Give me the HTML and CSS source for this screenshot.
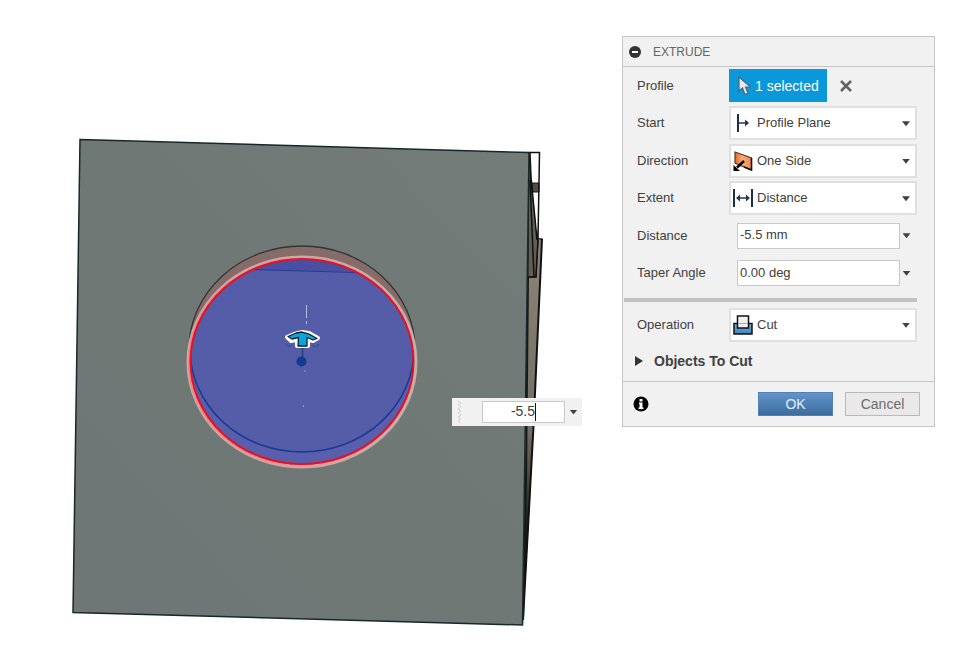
FILE: index.html
```html
<!DOCTYPE html>
<html lang="en">
<head>
<meta charset="utf-8">
<title>Extrude</title>
<link rel="stylesheet" href="styles.css">
</head>
<body>
<main class="viewport">
  <svg class="model" width="582" height="649" viewBox="0 0 582 649" aria-hidden="true">
    <defs>
      <linearGradient id="face" x1="0" y1="1" x2="1" y2="0">
        <stop offset="0" stop-color="#6e7776"/><stop offset=".5" stop-color="#6f7874"/><stop offset="1" stop-color="#737c78"/>
      </linearGradient>
      <linearGradient id="side" x1="0" y1="0" x2="0" y2="1">
        <stop offset="0" stop-color="#8b8577"/><stop offset=".5" stop-color="#746c63"/><stop offset=".75" stop-color="#1d1c1b"/><stop offset="1" stop-color="#111"/>
      </linearGradient>
      <linearGradient id="rim" x1="0" y1="0" x2="1" y2="0">
        <stop offset="0" stop-color="#ff7d80"/><stop offset=".5" stop-color="#f59092"/><stop offset="1" stop-color="#c9adab"/>
      </linearGradient>
      <clipPath id="profile"><ellipse cx="302" cy="362" rx="112" ry="103"/></clipPath>
    </defs>
    <path d="M528 240H542L533 426L530 500L523 625Z" fill="url(#side)"/>
    <path d="M542 239L533.500 426L529.500 500L523 620" fill="none" stroke="#111" stroke-width="2"/>
    <path d="M528 277L526 480L523 620" fill="none" stroke="#191715" stroke-width="2"/>
    <path d="M529 153L532 192L538 240L536 277H528Z" fill="#625e55" stroke="#161616"/>
    <path d="M530 153L532 183L537 238L538 153Z" fill="#fff"/>
    <path d="M532 183H539V192H533Z" fill="#514b45" stroke="#171717"/>
    <path d="M530 153L531 177L537 240M529 152.500H539.500L538 239H542.500M530 180L534 277M538 240L536 277H528" fill="none" stroke="#111" stroke-width="1.500"/>
    <path d="M80 139.500L529 152.500L522.500 625L73 612.500Z" fill="url(#face)" stroke="#18272b" stroke-width="1.500"/>
    <ellipse cx="302" cy="349" rx="113" ry="103" fill="#876b69" stroke="#303635" stroke-width="1.300"/>
    <ellipse cx="302" cy="362" rx="112" ry="103" fill="#595fac"/>
    <g clip-path="url(#profile)">
      <ellipse cx="302" cy="349" rx="112" ry="103" fill="#555ca8" stroke="#173c91" stroke-width="1.500"/>
      <path d="M200 250H410V272L250 270Z" fill="#494fa3"/>
      <path d="M250 269.500L356 272.500" stroke="#293b91"/>
    </g>
    <ellipse cx="302" cy="362" rx="114" ry="105" fill="none" stroke="#bfaeaa" stroke-width="3"/>
    <ellipse cx="302" cy="362" rx="113" ry="104" fill="none" stroke="url(#rim)" stroke-width="2"/>
    <ellipse cx="302" cy="361.500" rx="111.500" ry="102.500" fill="none" stroke="#e01426" stroke-width="2"/>
    <path d="M306.500 305V318M306.500 321V324" stroke="#b6b9d7"/>
    <path d="M286 344Q288 348 292 345M312 345Q316 349 319 344" fill="none" stroke="#394291"/>
    <path d="M302.500 348V358" stroke="#29387f" stroke-width="1.500"/>
    <circle cx="301.500" cy="361.500" r="5" fill="#103c91"/>
    <path d="M305 370V372M303.500 405V407" stroke="#9197cb"/>
    <path d="M302 332L309 333L318 338L313 341L308 339.500V346H297V339.500L291 341L287 337L294 334Z" fill="#fff" stroke="#fff" stroke-width="4" stroke-linejoin="round"/>
    <path d="M302 332L309 334L317 338.500L313 340L307 337.500V346H298L298.500 337.500L292 339L288 336.500L296 333Z" fill="#0aa5df" stroke="#101d27" stroke-width="1.300" stroke-linejoin="round"/>
  </svg>
  <form class="quick">
    <svg class="grip" width="6" height="24" viewBox="0 0 6 24" aria-hidden="true"><path d="M1 1L4 3L1 5L4 7L1 9L4 11L1 13L4 15L1 17L4 19L1 21L4 23" fill="none" stroke="#c6c6c6" stroke-dasharray="2 1"/></svg>
    <span class="quick-field"><input class="field" aria-label="Quick distance" value="-5.5"><i class="caret"></i></span>
    <button class="arrow" type="button" aria-label="Distance options"></button>
  </form>
</main>
<form class="panel">
  <header class="panel-head">
    <button class="plain" type="button" aria-label="Collapse"><svg width="12" height="12" viewBox="0 0 12 12"><circle cx="6" cy="6" r="6" fill="#333"/><path d="M3 6H9" stroke="#fff" stroke-width="2"/></svg></button>
    <h1>EXTRUDE</h1>
  </header>
  <div class="rows">
    <div class="row">
      <label for="profile-pick">Profile</label>
      <div class="selection">
        <button class="pick" id="profile-pick" type="button"><svg width="13" height="19" viewBox="0 0 13 19"><path d="M1 1V15L4.500 12L7 18.500L10 17L7.500 11H12.500Z" fill="#e2e8eb" stroke="#4c6878" stroke-width="1.200"/></svg>1 selected</button>
        <button class="plain" type="button" aria-label="Clear selection"><svg width="12" height="12" viewBox="0 0 12 12"><path d="M1 1L11 11M11 1L1 11" stroke="#626262" stroke-width="2.500"/></svg></button>
      </div>
    </div>
    <div class="row">
      <label for="start">Start</label>
      <div class="combo">
        <svg class="combo-icon" width="20" height="20" viewBox="0 0 20 20"><path d="M5 1V19" stroke="#192e50" stroke-width="2"/><path d="M6 10H14" stroke="#293746" stroke-width="1.500"/><path d="M12 6.500L16 10L12 13.500Z" fill="#293746"/></svg>
        <select id="start"><option>Profile Plane</option></select><i class="tri"></i>
      </div>
    </div>
    <div class="row">
      <label for="direction">Direction</label>
      <div class="combo">
        <svg class="combo-icon" width="20" height="20" viewBox="0 0 20 20"><defs><linearGradient id="copper"><stop offset="0" stop-color="#d66b2e"/><stop offset=".45" stop-color="#ffad74"/><stop offset="1" stop-color="#e8894b"/></linearGradient></defs><path d="M2 1L18.500 7V19L2 12Z" fill="url(#copper)" stroke="#593929" stroke-width="1.200"/><path d="M18.500 7V19L11 16" fill="none" stroke="#111" stroke-width="1.500"/><path d="M11 10L4 16.500" stroke="#000" stroke-width="2.500"/><path d="M.500 14V20H7Z" fill="#000"/></svg>
        <select id="direction"><option>One Side</option></select><i class="tri"></i>
      </div>
    </div>
    <div class="row">
      <label for="extent">Extent</label>
      <div class="combo">
        <svg class="combo-icon" width="20" height="20" viewBox="0 0 20 20"><path d="M1 1V19M19 1V19" stroke="#192e50" stroke-width="2"/><path d="M5 10H15" stroke="#293746" stroke-width="1.500"/><path d="M7 6.500L3 10L7 13.500ZM13 6.500L17 10L13 13.500Z" fill="#293746"/></svg>
        <select id="extent"><option>Distance</option></select><i class="tri"></i>
      </div>
    </div>
    <div class="row">
      <label for="distance">Distance</label>
      <div class="value"><input class="field" id="distance" value="-5.5 mm"><button class="arrow" type="button" aria-label="Distance options"></button></div>
    </div>
    <div class="row">
      <label for="taper">Taper Angle</label>
      <div class="value"><input class="field" id="taper" value="0.00 deg"><button class="arrow" type="button" aria-label="Taper options"></button></div>
    </div>
  </div>
  <hr>
  <div class="rows operation">
    <div class="row">
      <label for="operation">Operation</label>
      <div class="combo">
        <svg class="combo-icon" width="20" height="20" viewBox="0 0 20 20"><defs><linearGradient id="steel" x2="0" y2="1"><stop offset="0" stop-color="#79b0da"/><stop offset="1" stop-color="#3f83bd"/></linearGradient></defs><path d="M1 8.500H19V19H1Z" fill="url(#steel)" stroke="#111" stroke-width="1.500"/><path d="M4.500 1H15.500V13H4.500Z" fill="#f1f1f1" stroke="#111" stroke-width="1.500"/><path d="M5 8.500H15" stroke="#aaa"/></svg>
        <select id="operation"><option>Cut</option></select><i class="tri"></i>
      </div>
    </div>
    <button class="plain objects" type="button"><svg width="8" height="10" viewBox="0 0 8 10"><path d="M0 0L8 5L0 10Z" fill="#333"/></svg>Objects To Cut</button>
  </div>
  <footer class="panel-foot">
    <button class="plain info" type="button" aria-label="Information"><svg width="16" height="16" viewBox="0 0 16 16"><circle cx="8" cy="8" r="7.500" fill="#000"/><path d="M6.500 3H9.500V5.500H6.500ZM6 6.500H9.500V11.500H10.500V13H5.500V11.500H6.500V8H6Z" fill="#fff"/></svg></button>
    <button class="btn ok" type="submit">OK</button>
    <button class="btn" type="button">Cancel</button>
  </footer>
</form>
</body>
</html>
```
FILE: styles.css
```css
* { box-sizing: border-box; }
body {
  margin: 0;
  min-height: 100vh;
  display: flex;
  align-items: flex-start;
  background: #fff;
  color: #404040;
  font: 13px/16px "Liberation Sans", Arial, sans-serif;
}
button, input, select { font: inherit; color: inherit; margin: 0; border-radius: 0; outline: none; }
svg { display: block; flex: none; }
.viewport { position: relative; flex: 1; min-width: 582px; }
.quick {
  position: absolute;
  left: 452px;
  top: 398px;
  display: flex;
  align-items: center;
  width: 130px;
  height: 28px;
  padding-left: 5px;
  background: #f1f1f1;
}
.grip { margin-right: 19px; }
.quick-field { position: relative; width: 83px; }
.field {
  display: block;
  width: 100%;
  height: 26px;
  padding: 0 2px 2px;
  background: #fff;
  border: 1px solid #c8c8c8;
}
.quick .field { height: 22px; padding-right: 29px; text-align: right; font-size: 14px; }
.caret { position: absolute; right: 29px; top: 2px; width: 1px; height: 18px; background: #111; }
.arrow { display: grid; place-items: center; flex: 1; height: 24px; padding: 0; border: 0; background: none; }
.arrow::before, .tri { content: ""; width: 8px; height: 5px; background: #404040; clip-path: polygon(0 0, 100% 0, 50% 100%); }
.panel {
  flex: 0 1 313px;
  margin: 36px 37px 0 0;
  background: #f1f1f1;
  border: 1px solid #c6c6c6;
}
.panel-head { display: flex; align-items: center; gap: 12px; height: 30px; padding-left: 6px; border-bottom: 1px solid #c6c6c6; }
h1 { margin: 0; font-size: 12px; font-weight: 400; color: #666; }
.plain { display: flex; align-items: center; padding: 0; border: 0; background: none; }
.rows { display: grid; grid-auto-rows: 1fr; min-height: 225px; padding: 0 17px 0 14px; }
.row { display: grid; grid-template-columns: 92px 1fr; align-items: center; }
.selection { display: flex; align-items: center; gap: 13px; }
.pick { display: flex; align-items: center; gap: 4px; width: 98px; height: 33px; padding: 0 0 0 9px; border: 0; background: #0b98da; color: #fff; font-size: 14px; white-space: nowrap; }
.combo { position: relative; }
.combo select { display: block; width: 100%; height: 34px; padding: 0 24px 0 26px; appearance: none; background: #fff; border: 2px solid #e0e0e0; }
.combo-icon { position: absolute; left: 4px; top: 7px; }
.tri { position: absolute; right: 7px; top: 15px; pointer-events: none; }
.value { display: flex; align-items: center; padding: 0 4px 0 8px; }
.value .field { flex: 0 1 163px; min-width: 0; }
hr { height: 4px; margin: 6px 17px 4px 1px; border: 0; background: #c2c2c2; }
.operation { min-height: 75px; }
.objects { gap: 11px; margin: 0 0 3px -2px; font-size: 14px; font-weight: 700; }
.panel-foot { display: flex; align-items: center; gap: 12px; min-height: 45px; padding: 0 14px 0 10px; border-top: 1px solid #c6c6c6; }
.info { margin-right: auto; }
.btn { width: 75px; height: 24px; padding: 0; border: 1px solid #b9b9b9; background: #e9e9e9; color: #6b6b6b; font-size: 14px; }
.ok { border-color: #5281b2; background: linear-gradient(#6395c8, #3c6c9f); color: #e3eefa; }
```
